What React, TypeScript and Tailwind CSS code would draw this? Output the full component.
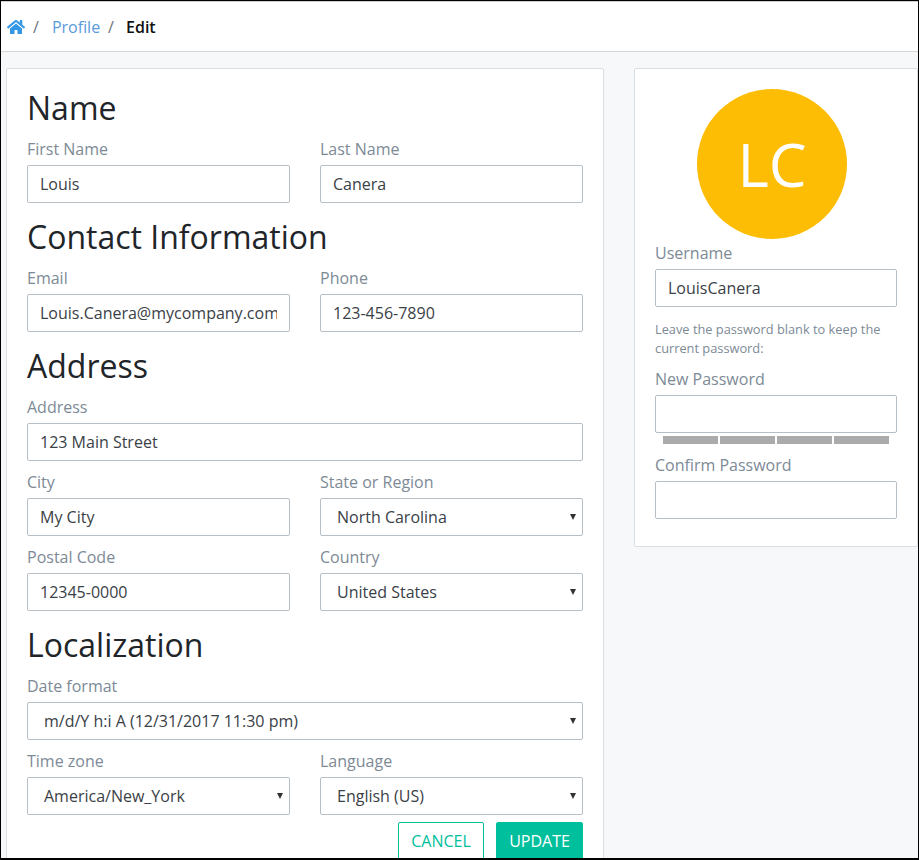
import { FaHome } from "react-icons/fa";

const inputClass =
  "block w-full h-[38px] px-3 bg-white border border-[#b6bfc6] rounded-[2px] text-base text-[#3a4147] outline-none";

function Field({ label, value = "" }: { label: string; value?: string }) {
  return (
    <div className="min-w-0">
      <label className="block text-base leading-6 mb-1 text-[#7d8a96]">{label}</label>
      <input type="text" readOnly value={value} className={inputClass} />
    </div>
  );
}

function SelectField({ label, value }: { label: string; value: string }) {
  return (
    <div className="min-w-0">
      <label className="block text-base leading-6 mb-1 text-[#7d8a96]">{label}</label>
      <div className="relative">
        <select
          value={value}
          onChange={() => {}}
          className={inputClass + " appearance-none pl-4"}
        >
          <option>{value}</option>
        </select>
        <svg className="absolute right-[7px] top-[16px] pointer-events-none" width="6" height="6" viewBox="0 0 6 6">
          <path d="M0 0h6L3 6z" fill="#333" />
        </svg>
      </div>
    </div>
  );
}

function Heading({ children, first }: { children: string; first?: boolean }) {
  return (
    <h3 className={`text-[32px] leading-[38px] mb-[10px] text-[#212529] ${first ? "" : "mt-[15px]"}`}>
      {children}
    </h3>
  );
}

export default function App() {
  return (
    <div className="w-[919px] h-[860px] overflow-hidden bg-[#f7f8fa] border-t border-l border-r border-b-2 border-black font-['Open_Sans',sans-serif]">
      {/* Breadcrumb */}
      <div className="h-[51px] bg-white border-b border-[#d6d6d6] border-t border-t-[#cfcfcf] flex items-center pl-[6px] text-base">
        <FaHome className="text-[#3397e8] w-[18px] h-[18px]" />
        <span className="text-[#6c757d] ml-2">/</span>
        <span className="text-[#5a9bdc] ml-[13px]">Profile</span>
        <span className="text-[#6c757d] ml-2">/</span>
        <span className="text-[#111] font-semibold ml-3">Edit</span>
      </div>

      <div className="flex items-start pl-[5px] pt-4">
        {/* Main form */}
        <div className="w-[598px] shrink-0 bg-white border border-[#dcdfe2] rounded-[2px] pt-5 px-5 pb-4">
          <Heading first>Name</Heading>
          <div className="grid grid-cols-2 gap-x-[30px]">
            <Field label="First Name" value="Louis" />
            <Field label="Last Name" value="Canera" />
          </div>

          <Heading>Contact Information</Heading>
          <div className="grid grid-cols-2 gap-x-[30px]">
            <Field label="Email" value="Louis.Canera@mycompany.com" />
            <Field label="Phone" value="123-456-7890" />
          </div>

          <Heading>Address</Heading>
          <div className="grid grid-cols-2 gap-x-[30px] gap-y-[9px]">
            <div className="col-span-2">
              <Field label="Address" value="123 Main Street" />
            </div>
            <Field label="City" value="My City" />
            <SelectField label="State or Region" value="North Carolina" />
            <Field label="Postal Code" value="12345-0000" />
            <SelectField label="Country" value="United States" />
          </div>

          <Heading>Localization</Heading>
          <div className="grid grid-cols-2 gap-x-[30px] gap-y-[9px]">
            <div className="col-span-2">
              <SelectField label="Date format" value="m/d/Y h:i A (12/31/2017 11:30 pm)" />
            </div>
            <SelectField label="Time zone" value="America/New_York" />
            <SelectField label="Language" value="English (US)" />
          </div>

          <div className="flex justify-end gap-3 mt-[7px]">
            <button className="w-[86px] h-[38px] border border-[#00bf9c] rounded-[2px] text-[#00bf9c] text-base bg-white">
              CANCEL
            </button>
            <button className="w-[87px] h-[38px] border border-[#00bf9c] rounded-[2px] text-white text-base bg-[#00bf9c]">
              UPDATE
            </button>
          </div>
        </div>

        {/* Account card */}
        <div className="w-[284px] ml-[30px] shrink-0 bg-white border border-[#dcdfe2] rounded-[2px] pt-5 px-5 pb-[27px]">
          <div className="w-[150px] h-[150px] ml-[42px] rounded-full bg-[#fdbd05] text-white text-[60px] flex items-center justify-center">
            LC
          </div>
          <div className="mt-[2px]">
            <Field label="Username" value="LouisCanera" />
          </div>
          <p className="text-[12.8px] leading-[19px] text-[#7d8a96] mt-[13px] mb-[9px]">
            Leave the password blank to keep the current password:
          </p>
          <Field label="New Password" />
          <div className="flex gap-[2px] mx-2 mt-[3px] mb-[9px]">
            <div className="w-[55px] h-2 bg-[#ababab]" />
            <div className="w-[55px] h-2 bg-[#ababab]" />
            <div className="w-[55px] h-2 bg-[#ababab]" />
            <div className="w-[55px] h-2 bg-[#ababab]" />
          </div>
          <Field label="Confirm Password" />
        </div>
      </div>
    </div>
  );
}
